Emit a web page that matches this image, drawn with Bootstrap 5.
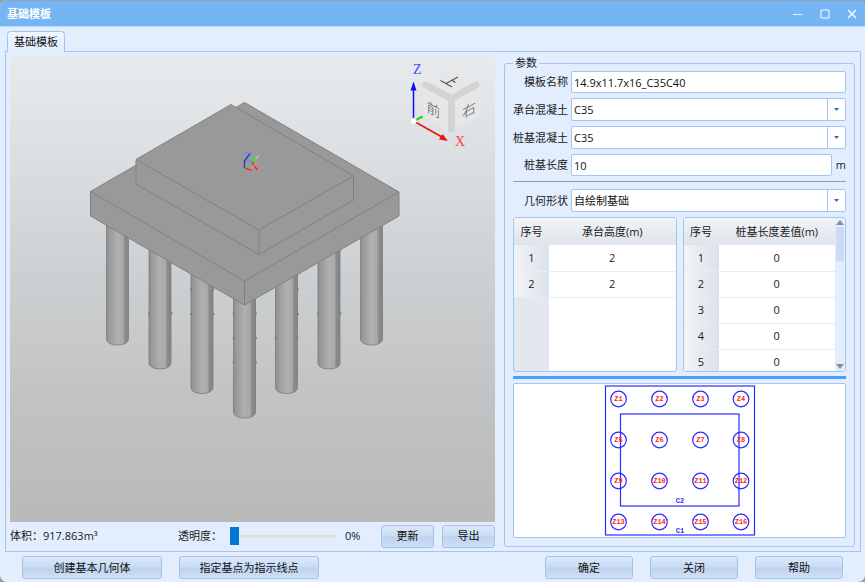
<!DOCTYPE html>
<html lang="zh-CN">
<head>
<meta charset="utf-8">
<meta name="viewport" content="width=device-width, initial-scale=1">
<title>基础模板</title>
<link href="https://cdn.jsdelivr.net/npm/bootstrap@5.3.0/dist/css/bootstrap.min.css" rel="stylesheet">
<style>
  body { font-family: "Open Sans", "Noto Sans CJK SC", sans-serif; font-size: 11px; line-height: 16px; color: #1a1a1a; background: #9a9a9a; }
  .dialog { background: #e2edfd; border-radius: 7px; overflow: hidden; }
  .titlebar { height: 27px; padding-left: 7px; background: #76b5f3; border-top: 1px solid #8fa6bf; border-bottom: 1px solid #bcd9fa; }
  .titlebar h1 { font-size: 11px; line-height: 16px; }
  .win-btn { width: 27px; height: 24px; color: #fff; }
  .tabs { padding: 4px 7px 0; }
  .tab-btn { height: 21px; margin-bottom: -1px; padding: 0 6px; font-size: 11px; line-height: 16px; color: #111; background: linear-gradient(#eef5fe, #e2edfd); border: 1px solid #a3c5f0; border-bottom: 0; border-radius: 4px 4px 0 0; position: relative; }
  .pane { border: 1px solid #a3c5f0; margin: 0 4px 0 5px; padding: 3px 5px 4px 4px; gap: 9px; }
  .scene { background: linear-gradient(#e7ebed 0%, #dfe3e5 15%, #cfd3d5 42%, #c2c3c4 72%, #b9b9b9 100%); min-height: 320px; height: 0; }
  .status { height: 25px; padding-top: 3px; }
  .lbl-alpha { width: 52px; }
  .alpha-value { width: 45px; padding-left: 9px; }
  .alpha { appearance: none; width: 106px; height: 18px; background: linear-gradient(#d6d9dc, #e6e6e6) center / 100% 3px no-repeat; }
  .alpha::-webkit-slider-thumb { appearance: none; width: 9px; height: 18px; background: #0078d7; border: 0; }
  .dlg-btn { --bs-btn-padding-x: 4px; --bs-btn-padding-y: 0; --bs-btn-font-size: 11px; --bs-btn-line-height: 16px; --bs-btn-color: #111; --bs-btn-border-color: #a6c3ea; --bs-btn-border-radius: 3px; --bs-btn-hover-color: #111; --bs-btn-hover-border-color: #7faee6; height: 23px; background: linear-gradient(#dbe8f8 0%, #c9dcf4 48%, #bdd2ee 52%, #cfe0f6 100%); }
  .btn-s { width: 53px; }
  .btn-m { width: 88px; }
  .btn-l { width: 140px; }
  .side { flex: 0 1 351px; }
  .params { border: 1px solid #a3c5f0; border-radius: 3px; padding: 0 8px 8px; min-width: 0; flex: 1; }
  .params legend { font-size: 11px; line-height: 16px; padding: 0 2px; margin: 0; }
  .params-body { height: 100%; }
  .field { display: grid; grid-template-columns: 55px 1fr; column-gap: 3px; align-items: center; margin-bottom: 5px; }
  .field label { text-align: right; white-space: nowrap; }
  .field .form-control, .field .form-select { font-size: 11px; line-height: 16px; color: #111; height: 22px; padding: 0 2px; border-color: #a3c5f0; border-radius: 2px; background-color: #fff; }
  .field .form-select { height: 23px; background-image: url("data:image/svg+xml,%3Csvg xmlns='http://www.w3.org/2000/svg' width='5' height='3'%3E%3Cpath d='M0 0h5L2.5 3z' fill='%232f6bb5'/%3E%3C/svg%3E"), linear-gradient(#a3c5f0, #a3c5f0); background-size: 5px 3px, 1px 100%; background-position: right 6px center, right 17px center; background-repeat: no-repeat; }
  .unit { width: 15px; text-align: right; }
  .rule { margin: 0 0 7px; border-top: 1px solid #8e9dae; opacity: 1; }
  .grids { gap: 6px; }
  .grid-box { height: 155px; border: 1px solid #a3c5f0; border-radius: 3px; background: #fff; overflow: hidden; flex: 1 1 0; }
  .index-fill { background: linear-gradient(90deg, #e2e8ee 35px, #fff 35px); }
  .data-grid { width: 100%; table-layout: fixed; text-align: center; font-size: 11px; line-height: 16px; }
  .data-grid thead { background: linear-gradient(#f2f4f6, #dde4eb); }
  .data-grid thead th { height: 27px; font-weight: 400; }
  .data-grid .idx { width: 35px; }
  .data-grid tbody th { font-weight: 400; background: linear-gradient(90deg, #f2f4f6, #dbe2ea); }
  .data-grid tbody tr { height: 26px; border-bottom: 1px solid #e2edfd; background: #fff; }
  .scroll { width: 10px; background: #e2edfd; padding: 2px 1px; }
  .scroll-thumb { height: 34px; background: #c9dcf3; margin-top: 2px; }
  .splitter { height: 3px; background: #4a9ff5; margin: 4px 0; }
  .plan { border: 1px solid #a3c5f0; border-radius: 2px; background: #fff; min-height: 154px; height: 0; }
  .foot { padding: 4px 22px 3px; gap: 17px; }
</style>
</head>
<body>
<main class="dialog min-vh-100 d-flex flex-column">
  <header class="titlebar d-flex align-items-center">
    <h1 class="m-0 fw-bold text-white flex-grow-1">基础模板</h1>
    <button type="button" class="win-btn btn border-0 p-0 d-flex align-items-center justify-content-center" aria-label="最小化"><svg width="10" height="10" stroke="#e8f3fe" fill="none"><path d="M0 5.500h9"/></svg></button>
    <button type="button" class="win-btn btn border-0 p-0 d-flex align-items-center justify-content-center" aria-label="最大化"><svg width="10" height="10" stroke="#fff" fill="none"><path d="M1 1h8v8h-8z"/></svg></button>
    <button type="button" class="win-btn btn border-0 p-0 d-flex align-items-center justify-content-center" aria-label="关闭窗口"><svg width="10" height="10" stroke="#fff" stroke-width="1.300" fill="none"><path d="M1 1l8 8M9 1l-8 8"/></svg></button>
  </header>

  <div class="tabs" role="tablist">
    <button type="button" class="tab-btn d-block" role="tab" id="tab-base" aria-selected="true" aria-controls="pane-base">基础模板</button>
  </div>

  <section class="pane flex-grow-1 d-flex" id="pane-base" role="tabpanel" aria-labelledby="tab-base">
    <div class="flex-grow-1 d-flex flex-column">
      <div class="scene flex-grow-1">
        <svg class="d-block w-100 h-100" viewBox="10 55 485 467" role="img" aria-label="基础三维视图">
          <defs>
            <linearGradient id="pileFill">
              <stop offset="0" stop-color="#8e8e8e"/><stop offset=".15" stop-color="#9b9b9b"/><stop offset=".5" stop-color="#b0b0b0"/><stop offset=".75" stop-color="#a8a8a8"/><stop offset=".84" stop-color="#8a8a8a"/><stop offset="1" stop-color="#858585"/>
            </linearGradient>
          </defs>
          <g fill="url(#pileFill)" stroke="#7b7b7b" stroke-width=".8">
            <path d="M106.500 220v119c0 8 22 8 22 0v-119z"/>
            <path d="M149 230v133c0 8 22 8 22 0v-133z"/>
            <path d="M191 250v137.500c0 8 22 8 22 0v-137.500z"/>
            <path d="M233.500 280v132c0 8 22 8 22 0v-132z"/>
            <path d="M275.500 250v137.500c0 8 22 8 22 0v-137.500z"/>
            <path d="M318 230v133c0 8 22 8 22 0v-133z"/>
            <path d="M360.500 220v119c0 8 22 8 22 0v-119z"/>
          </g>
          <path stroke="#777" stroke-width="1.500" stroke-dasharray="2 22.500" fill="none" d="M149 312.500v3M171.500 312.500v3M191 288.500v40M213.500 288.500v40M233.500 312.500v52M256 312.500v52M275.500 337v3M298 288.500v50M318 312.500v3M340.500 312.500v3"/>
          <g fill="#999" stroke="#808080" stroke-linejoin="round">
            <path d="M90.500 191.500L244.500 102.500L399 192V216L244.500 305L90.500 216z"/>
            <path fill="none" d="M90.500 191.500L244.500 281L399 192M244.500 281V305"/>
            <path d="M136 159.500L231 104.500L353.500 176V200L259 254.500L136 184z"/>
            <path fill="none" d="M136 159.500L259 230L353.500 176M259 230V254.500"/>
          </g>
          <g fill="none" stroke-width="1.300">
            <path stroke="#2a2af0" d="M244.500 168V161L250.500 153"/>
            <path stroke="#8080f0" d="M244.500 153H251.500M247.500 161H252"/>
            <path stroke="#30e040" d="M245 167L249.500 164.500M250.500 156L254.500 160.500V165M254.500 160.500L256 158"/>
            <path stroke="#90e898" d="M255.500 159L259 155.500"/>
            <path stroke="#f02020" d="M245 168L251.500 170.500M252 162L258 171"/>
            <path stroke="#f08080" d="M258.500 162L251.500 168M255 171H259"/>
          </g>
          <path fill="#e7e7e7" d="M451 69L477 82Q480 84 480 88V115L454 130Q451 132 448 130L424 117V84z"/>
          <path fill="none" stroke="#d3d3d3" stroke-width="7" stroke-linecap="round" stroke-linejoin="round" d="M426 85L451.500 98.500L476 85M451.500 98.500V129"/>
          <g fill="#555" font-family="'Noto Sans CJK SC', sans-serif" font-weight="300" font-size="14" text-anchor="middle">
            <text transform="translate(433.500 115) skewY(28)">前</text>
            <text transform="translate(469 115) skewY(-28)">右</text>
          </g>
          <path fill="none" stroke="#555" stroke-width="1.100" d="M440.500 80.500L452 87M446 83.500L458 77M451.500 80L455.500 82.500"/>
          <g font-family="'Liberation Serif', serif" font-size="14">
            <text x="413" y="74" fill="#4a4aff">Z</text>
            <text x="455" y="146" fill="#ff4040">X</text>
          </g>
          <path stroke="#1010e8" stroke-width="1.500" d="M413.500 121V88"/>
          <path fill="#1010e8" d="M413.500 81.500L416.500 90.500H410.500z"/>
          <path stroke="#22d822" stroke-width="2" d="M415 120.500L422.500 116.500"/>
          <path stroke="#f01010" stroke-width="1.500" d="M413.500 121L442 137"/>
          <path fill="#f01010" d="M448 141L439 139.500L442.500 134z"/>
          <circle cx="413.500" cy="121" r="3" fill="#fff" stroke="#ddd" stroke-width=".5"/>
        </svg>
      </div>
      <div class="status d-flex align-items-center">
        <span class="flex-grow-1">体积：917.863m³</span>
        <label class="lbl-alpha" for="alpha">透明度：</label>
        <input class="alpha" type="range" id="alpha" min="0" max="100" value="0">
        <output class="alpha-value" for="alpha">0%</output>
        <button type="button" class="btn dlg-btn btn-s me-2">更新</button>
        <button type="button" class="btn dlg-btn btn-s">导出</button>
      </div>
    </div>

    <div class="side d-flex flex-column">
      <fieldset class="params">
        <legend class="float-none w-auto">参数</legend>
        <div class="params-body d-flex flex-column">
          <div class="field">
            <label for="tpl-name">模板名称</label>
            <input class="form-control" id="tpl-name" type="text" value="14.9x11.7x16_C35C40">
          </div>
          <div class="field">
            <label for="cap-conc">承台混凝土</label>
            <select class="form-select" id="cap-conc"><option>C35</option></select>
          </div>
          <div class="field">
            <label for="pile-conc">桩基混凝土</label>
            <select class="form-select" id="pile-conc"><option>C35</option></select>
          </div>
          <div class="field">
            <label for="pile-len">桩基长度</label>
            <div class="d-flex align-items-center">
              <input class="form-control" id="pile-len" type="text" value="10">
              <span class="unit">m</span>
            </div>
          </div>
          <hr class="rule">
          <div class="field">
            <label for="shape">几何形状</label>
            <select class="form-select" id="shape"><option>自绘制基础</option></select>
          </div>
          <div class="grids d-flex">
            <div class="grid-box index-fill">
              <table class="data-grid">
                <thead><tr><th class="idx" scope="col">序号</th><th scope="col">承台高度(m)</th></tr></thead>
                <tbody>
                  <tr><th scope="row">1</th><td>2</td></tr>
                  <tr><th scope="row">2</th><td>2</td></tr>
                </tbody>
              </table>
            </div>
            <div class="grid-box d-flex">
              <table class="data-grid flex-grow-1 w-auto align-self-start">
                <thead><tr><th class="idx" scope="col">序号</th><th scope="col">桩基长度差值(m)</th></tr></thead>
                <tbody>
                  <tr><th scope="row">1</th><td>0</td></tr>
                  <tr><th scope="row">2</th><td>0</td></tr>
                  <tr><th scope="row">3</th><td>0</td></tr>
                  <tr><th scope="row">4</th><td>0</td></tr>
                  <tr><th scope="row">5</th><td>0</td></tr>
                </tbody>
              </table>
              <div class="scroll d-flex flex-column" aria-hidden="true">
                <svg width="8" height="5" fill="#8c8c8c"><path d="M0 5h8L4 0z"/></svg>
                <div class="scroll-thumb"></div>
                <svg class="mt-auto" width="8" height="5" fill="#8c8c8c"><path d="M0 0h8L4 5z"/></svg>
              </div>
            </div>
          </div>
          <div class="splitter"></div>
          <div class="plan flex-grow-1">
            <svg class="d-block w-100 h-100" viewBox="514 385 331 152" role="img" aria-label="桩位平面图">
              <g fill="none" stroke="#2b2bff" stroke-width="1.200">
                <rect x="605.500" y="386.500" width="149" height="149"/>
                <rect x="620.500" y="414.500" width="118.500" height="92"/>
                <circle cx="618.500" cy="399.500" r="7.800"/><circle cx="659.500" cy="399.500" r="7.800"/><circle cx="700.500" cy="399.500" r="7.800"/><circle cx="741" cy="399.500" r="7.800"/>
                <circle cx="618.500" cy="440.500" r="7.800"/><circle cx="659.500" cy="440.500" r="7.800"/><circle cx="700.500" cy="440.500" r="7.800"/><circle cx="741" cy="440.500" r="7.800"/>
                <circle cx="618.500" cy="481.500" r="7.800"/><circle cx="659.500" cy="481.500" r="7.800"/><circle cx="700.500" cy="481.500" r="7.800"/><circle cx="741" cy="481.500" r="7.800"/>
                <circle cx="618.500" cy="522.500" r="7.800"/><circle cx="659.500" cy="522.500" r="7.800"/><circle cx="700.500" cy="522.500" r="7.800"/><circle cx="741" cy="522.500" r="7.800"/>
              </g>
              <g fill="#f22" font-family="'Liberation Mono', monospace" font-size="7" font-weight="700" text-anchor="middle">
                <text x="618.500" y="401">Z1</text><text x="659.500" y="401">Z2</text><text x="700.500" y="401">Z3</text><text x="741" y="401">Z4</text>
                <text x="618.500" y="442">Z5</text><text x="659.500" y="442">Z6</text><text x="700.500" y="442">Z7</text><text x="741" y="442">Z8</text>
                <text x="618.500" y="483">Z9</text><text x="659.500" y="483">Z10</text><text x="700.500" y="483">Z11</text><text x="741" y="483">Z12</text>
                <text x="618.500" y="524">Z13</text><text x="659.500" y="524">Z14</text><text x="700.500" y="524">Z15</text><text x="741" y="524">Z16</text>
                <g fill="#2b2bff"><text x="680" y="503">C2</text><text x="680" y="533">C1</text></g>
              </g>
            </svg>
          </div>
        </div>
      </fieldset>
    </div>
  </section>

  <footer class="foot d-flex">
    <button type="button" class="btn dlg-btn btn-l">创建基本几何体</button>
    <button type="button" class="btn dlg-btn btn-l">指定基点为指示线点</button>
    <button type="button" class="btn dlg-btn btn-m ms-auto">确定</button>
    <button type="button" class="btn dlg-btn btn-m">关闭</button>
    <button type="button" class="btn dlg-btn btn-m">帮助</button>
  </footer>
</main>
<script src="https://cdn.jsdelivr.net/npm/bootstrap@5.3.0/dist/js/bootstrap.bundle.min.js"></script>
</body>
</html>
